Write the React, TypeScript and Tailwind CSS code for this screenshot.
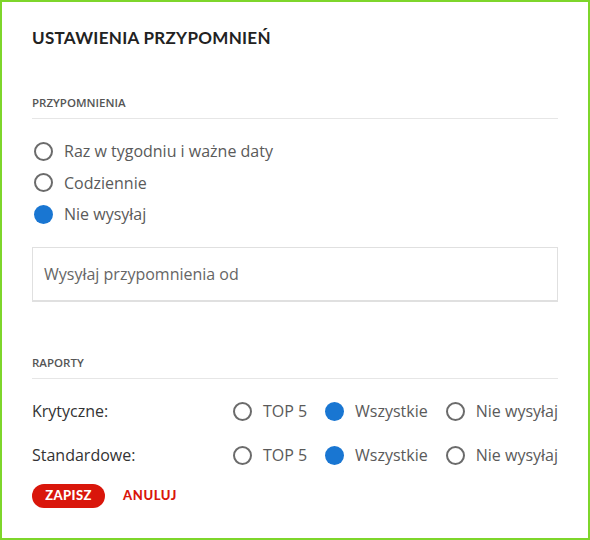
import React from "react";

function Radio({ checked, label }: { checked?: boolean; label: string }) {
  return (
    <div className="flex items-center">
      {checked ? (
        <span className="block w-[19px] h-[19px] rounded-full bg-[#1976d2]" />
      ) : (
        <span className="block w-[19px] h-[19px] rounded-full border-2 border-[#6b6b6b]" />
      )}
      <span className="ml-[11px] text-[16px] text-[#5a5a5a]">{label}</span>
    </div>
  );
}

export default function App() {
  return (
    <div className="w-[590px] h-[540px] border-2 border-[#7ed62b] bg-white" style={{ fontFamily: "'Open Sans', sans-serif" }}>
      <div className="pl-[30px] pr-[30px]">
        <h1 className="pt-[25px] text-[17px] font-bold text-[#222] tracking-[0.3px] leading-[22px]" style={{ fontFamily: "Lato, sans-serif" }}>
          USTAWIENIA PRZYPOMNIEŃ
        </h1>
        <div className="mt-[47px] text-[11.5px] font-semibold text-[#555] leading-[14px]">PRZYPOMNIENIA</div>
        <div className="mt-[8px] border-t border-[#e6e6e6]" />
        <div className="mt-[21px] flex flex-col gap-[9.5px] pl-[2px]">
          <div className="h-[22px] flex items-center"><Radio label="Raz w tygodniu i ważne daty" /></div>
          <div className="h-[22px] flex items-center"><Radio label="Codziennie" /></div>
          <div className="h-[22px] flex items-center"><Radio checked label="Nie wysyłaj" /></div>
        </div>
        <div className="mt-[22px] h-[55px] border border-[#e0e0e0] border-b-2 flex items-center pl-[11px] text-[16px] text-[#666]">
          Wysyłaj przypomnienia od
        </div>
        <div className="mt-[54px] text-[11.5px] font-semibold text-[#555] leading-[14px]">RAPORTY</div>
        <div className="mt-[8px] border-t border-[#e6e6e6]" />
        <div className="mt-[21px] flex items-center justify-between h-[22px]">
          <span className="text-[16px] text-[#333]">Krytyczne:</span>
          <div className="flex items-center gap-[18px]">
            <Radio label="TOP 5" />
            <Radio checked label="Wszystkie" />
            <Radio label="Nie wysyłaj" />
          </div>
        </div>
        <div className="mt-[22px] flex items-center justify-between h-[22px]">
          <span className="text-[16px] text-[#333]">Standardowe:</span>
          <div className="flex items-center gap-[18px]">
            <Radio label="TOP 5" />
            <Radio checked label="Wszystkie" />
            <Radio label="Nie wysyłaj" />
          </div>
        </div>
        <div className="mt-[18px] flex items-center gap-[18px]" style={{ fontFamily: "Lato, sans-serif" }}>
          <button className="h-[24px] w-[73px] rounded-full bg-[#d9160b] text-white text-[13px] font-black tracking-[0.4px]">ZAPISZ</button>
          <button className="text-[#d9160b] text-[13px] font-black tracking-[0.6px]">ANULUJ</button>
        </div>
      </div>
    </div>
  );
}
